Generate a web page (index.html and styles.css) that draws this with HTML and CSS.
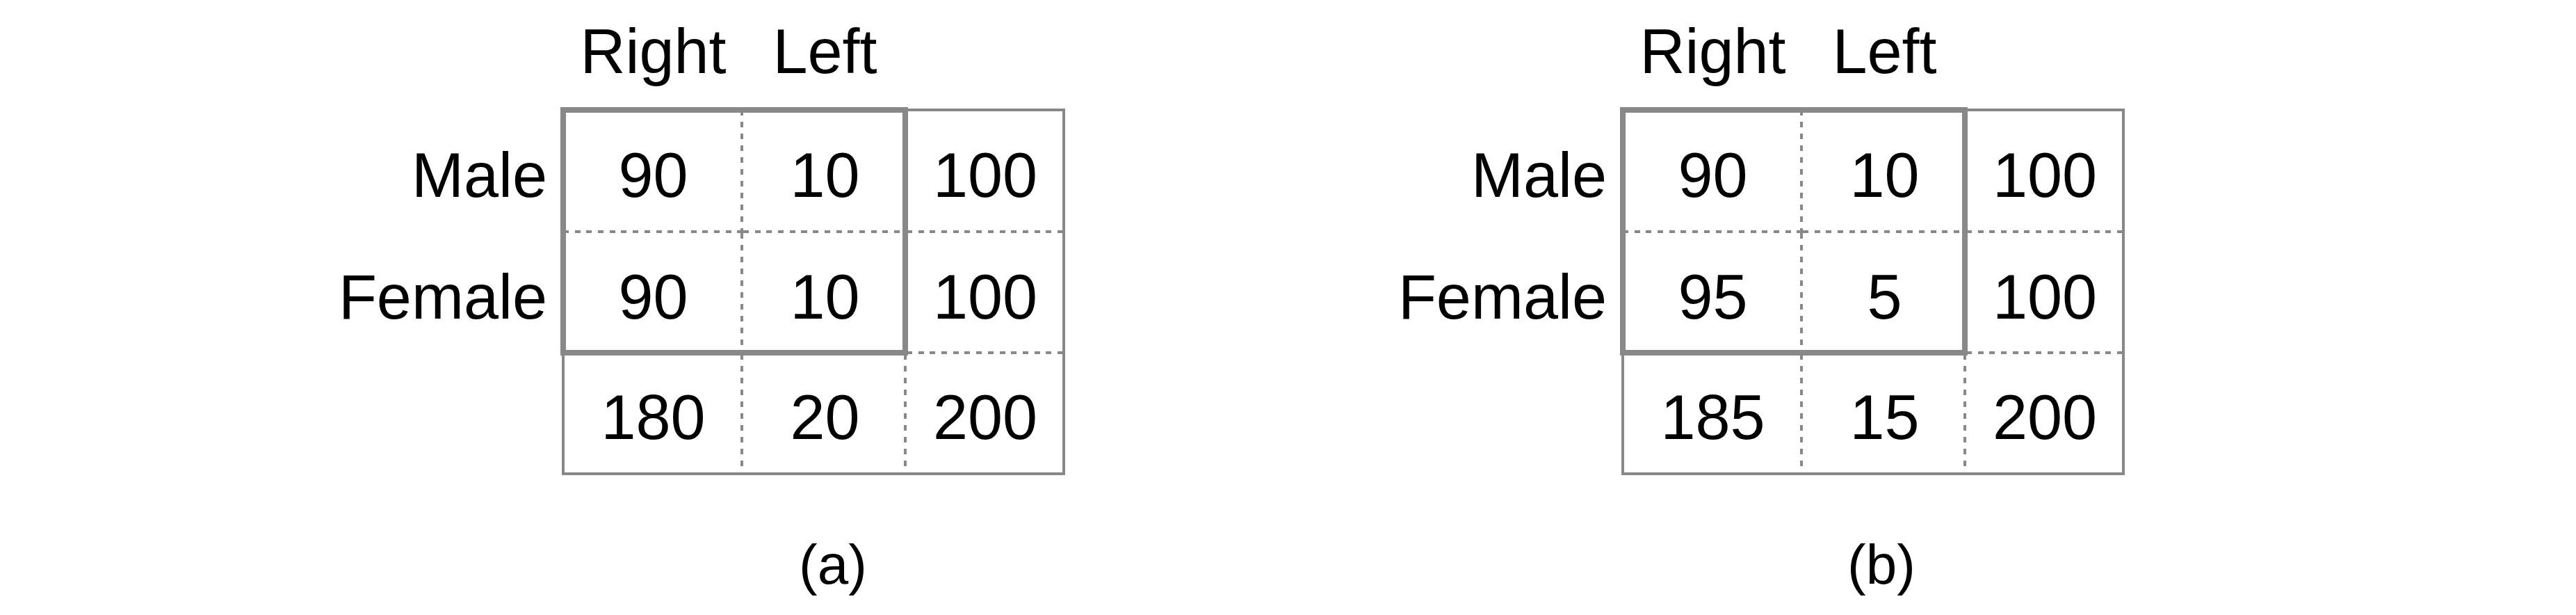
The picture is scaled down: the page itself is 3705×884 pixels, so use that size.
FILE: index.html
```html
<!DOCTYPE html>
<html>
<head>
<meta charset="utf-8">
<link rel="stylesheet" href="styles.css">
</head>
<body>
<div class="page">
  <div class="fig">
    <div class="hd c1">Right</div>
    <div class="hd c2">Left</div>
    <div class="lbl r1">Male</div>
    <div class="lbl r2">Female</div>
    <div class="cell r1 c1 dr db">90</div>
    <div class="cell r1 c2 db">10</div>
    <div class="cell r1 c3 db">100</div>
    <div class="cell r2 c1 dr db">90</div>
    <div class="cell r2 c2 db">10</div>
    <div class="cell r2 c3 db">100</div>
    <div class="cell r3 c1 dr">180</div>
    <div class="cell r3 c2 dr">20</div>
    <div class="cell r3 c3">200</div>
    <div class="frame"></div>
    <div class="box"></div>
    <div class="cap cap-a">(a)</div>
  </div>
  <div class="fig">
    <div class="hd c1">Right</div>
    <div class="hd c2">Left</div>
    <div class="lbl r1">Male</div>
    <div class="lbl r2">Female</div>
    <div class="cell r1 c1 dr db">90</div>
    <div class="cell r1 c2 db">10</div>
    <div class="cell r1 c3 db">100</div>
    <div class="cell r2 c1 dr db">95</div>
    <div class="cell r2 c2 db">5</div>
    <div class="cell r2 c3 db">100</div>
    <div class="cell r3 c1 dr">185</div>
    <div class="cell r3 c2 dr">15</div>
    <div class="cell r3 c3">200</div>
    <div class="frame"></div>
    <div class="box"></div>
    <div class="cap cap-b">(b)</div>
  </div>
</div>
</body>
</html>
```
FILE: styles.css
```css
html, body {
  margin: 0;
  padding: 0;
  background: #fff;
}
body {
  width: 3705px;
  height: 884px;
  overflow: hidden;
  font-family: "Liberation Sans", Arial, Helvetica, sans-serif;
  color: #000;
}
.page {
  display: flex;
  align-items: flex-start;
  padding-left: 480px;
  gap: 474px;
}
.fig {
  display: grid;
  grid-template-columns: 330px 259px 235px 226px;
  grid-template-rows: 158px 177px 174px 172px auto;
  font-size: 90px;
  line-height: 1;
}
.hd {
  grid-row: 1;
  align-self: start;
  padding-top: 29px;
  text-align: center;
}
.hd.c1 { grid-column: 2; }
.hd.c2 { grid-column: 3; }

.lbl {
  grid-column: 1;
  display: flex;
  align-items: center;
  justify-content: flex-end;
  padding-right: 23px;
  padding-top: 10px;
}
.r1 { grid-row: 2; }
.r2 { grid-row: 3; }
.r3 { grid-row: 4; }
.cell.c1 { grid-column: 2; }
.cell.c2 { grid-column: 3; }
.cell.c3 { grid-column: 4; }

.cell {
  display: flex;
  align-items: center;
  justify-content: center;
  padding-top: 10px;
  background-repeat: no-repeat;
}
.cell.dr {
  background-image: repeating-linear-gradient(to bottom, #888 0 8px, transparent 8px 17px);
  background-position: right top;
  background-size: 4px 100%;
}
.cell.db {
  background-image: repeating-linear-gradient(to right, #888 0 8px, transparent 8px 16.7px);
  background-position: left bottom;
  background-size: 100% 4px;
}
.cell.dr.db {
  background-image:
    repeating-linear-gradient(to bottom, #888 0 8px, transparent 8px 17px),
    repeating-linear-gradient(to right, #888 0 8px, transparent 8px 16.7px);
  background-position: right top, left bottom;
  background-size: 4px 100%, 100% 4px;
}

.frame {
  grid-row: 2 / 5;
  grid-column: 2 / 5;
  box-sizing: border-box;
  border: 4px solid #888;
  margin: -2px;
}
.box {
  grid-row: 2 / 4;
  grid-column: 2 / 4;
  box-sizing: border-box;
  border: 8px solid #888;
  margin: -4px -2px -2px -4px;
}

.cap {
  grid-row: 5;
  grid-column: 1 / -1;
  justify-self: start;
  margin-top: 91px;
  font-size: 80px;
  line-height: 1;
}
.cap-a { margin-left: 669px; }
.cap-b { margin-left: 653px; }
```
